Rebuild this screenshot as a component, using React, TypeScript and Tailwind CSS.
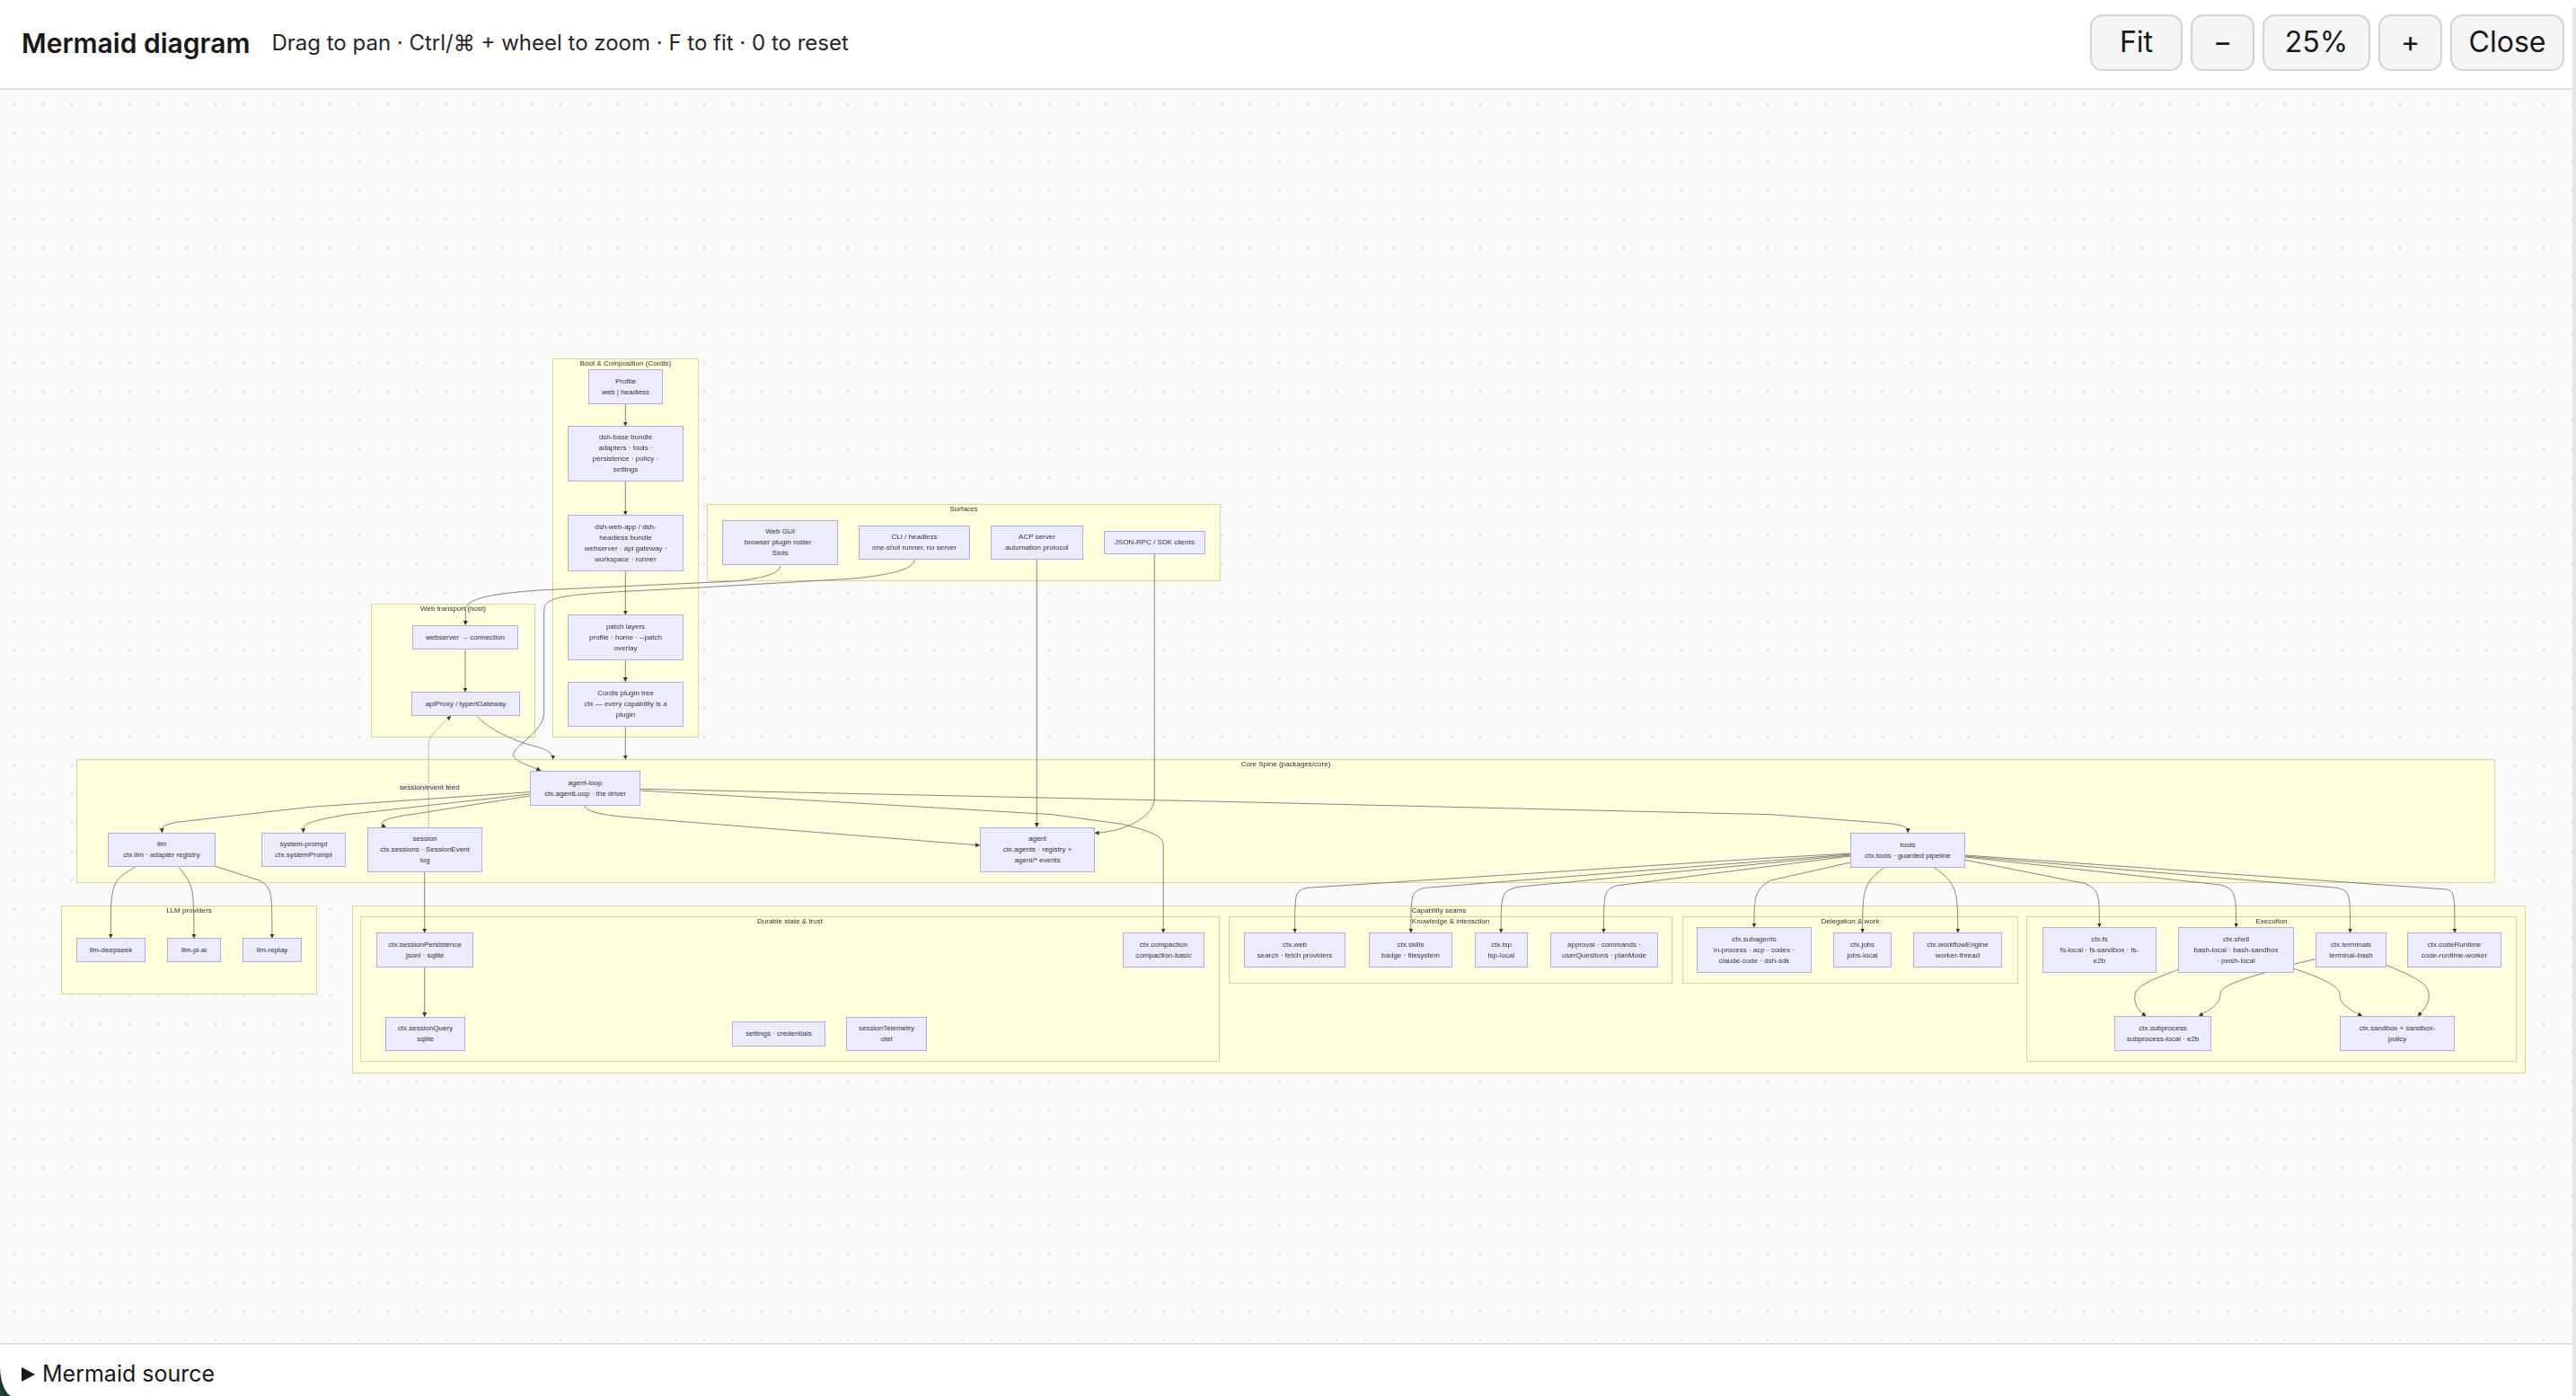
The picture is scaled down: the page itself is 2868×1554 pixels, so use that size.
import type { ReactNode } from 'react';

const ui = "font-['Inter',sans-serif]";

interface BoxProps {
  pos: string;
  lines: string[];
}

const clusters: { pos: string; label: string; labelPos: string }[] = [
  { pos: 'left-[615px] top-[399px] w-[163px] h-[422px]', label: 'Boot & Composition (Cordis)', labelPos: 'left-[615px] top-[399px] w-[163px]' },
  { pos: 'left-[413px] top-[672px] w-[183px] h-[149px]', label: 'Web transport (host)', labelPos: 'left-[413px] top-[672px] w-[183px]' },
  { pos: 'left-[787px] top-[561px] w-[572px] h-[86px]', label: 'Surfaces', labelPos: 'left-[787px] top-[561px] w-[572px]' },
  { pos: 'left-[85px] top-[845px] w-[2693px] h-[138px]', label: 'Core Spine (packages/core)', labelPos: 'left-[85px] top-[845px] w-[2693px]' },
  { pos: 'left-[68px] top-[1008px] w-[285px] h-[99px]', label: 'LLM providers', labelPos: 'left-[68px] top-[1008px] w-[285px]' },
  { pos: 'left-[392px] top-[1008px] w-[2420px] h-[187px]', label: 'Capability seams', labelPos: 'left-[392px] top-[1008px] w-[2420px]' },
  { pos: 'left-[401px] top-[1020px] w-[957px] h-[162px]', label: 'Durable state & trust', labelPos: 'left-[401px] top-[1020px] w-[957px]' },
  { pos: 'left-[1368px] top-[1020px] w-[494px] h-[75px]', label: 'Knowledge & interaction', labelPos: 'left-[1368px] top-[1020px] w-[494px]' },
  { pos: 'left-[1873px] top-[1020px] w-[374px] h-[75px]', label: 'Delegation & work', labelPos: 'left-[1873px] top-[1020px] w-[374px]' },
  { pos: 'left-[2256px] top-[1020px] w-[546px] h-[162px]', label: 'Execution', labelPos: 'left-[2256px] top-[1020px] w-[546px]' },
];

const nodes: BoxProps[] = [
  { pos: 'left-[655px] top-[411px] w-[83px] h-[39px]', lines: ['Profile', 'web | headless'] },
  { pos: 'left-[632px] top-[474px] w-[129px] h-[62px]', lines: ['dsh-base bundle', 'adapters · tools ·', 'persistence · policy ·', 'settings'] },
  { pos: 'left-[632px] top-[573px] w-[129px] h-[63px]', lines: ['dsh-web-app / dsh-', 'headless bundle', 'webserver · api gateway ·', 'workspace · runner'] },
  { pos: 'left-[632px] top-[684px] w-[129px] h-[51px]', lines: ['patch layers', 'profile · home · --patch', 'overlay'] },
  { pos: 'left-[632px] top-[759px] w-[129px] h-[50px]', lines: ['Cordis plugin tree', 'ctx — every capability is a', 'plugin'] },
  { pos: 'left-[459px] top-[696px] w-[118px] h-[27px]', lines: ['webserver → connection'] },
  { pos: 'left-[458px] top-[770px] w-[121px] h-[27px]', lines: ['apiProxy / typertGateway'] },
  { pos: 'left-[804px] top-[579px] w-[129px] h-[50px]', lines: ['Web GUI', 'browser plugin roster ·', 'Slots'] },
  { pos: 'left-[956px] top-[585px] w-[124px] h-[38px]', lines: ['CLI / headless', 'one-shot runner, no server'] },
  { pos: 'left-[1103px] top-[585px] w-[103px] h-[38px]', lines: ['ACP server', 'automation protocol'] },
  { pos: 'left-[1229px] top-[591px] w-[113px] h-[26px]', lines: ['JSON-RPC / SDK clients'] },
  { pos: 'left-[590px] top-[858px] w-[123px] h-[39px]', lines: ['agent-loop', 'ctx.agentLoop · the driver'] },
  { pos: 'left-[120px] top-[927px] w-[120px] h-[38px]', lines: ['llm', 'ctx.llm · adapter registry'] },
  { pos: 'left-[291px] top-[927px] w-[94px] h-[38px]', lines: ['system-prompt', 'ctx.systemPrompt'] },
  { pos: 'left-[409px] top-[921px] w-[128px] h-[50px]', lines: ['session', 'ctx.sessions · SessionEvent', 'log'] },
  { pos: 'left-[1091px] top-[921px] w-[128px] h-[50px]', lines: ['agent', 'ctx.agents · registry +', 'agent/* events'] },
  { pos: 'left-[2060px] top-[927px] w-[128px] h-[39px]', lines: ['tools', 'ctx.tools · guarded pipeline'] },
  { pos: 'left-[85px] top-[1044px] w-[77px] h-[27px]', lines: ['llm-deepseek'] },
  { pos: 'left-[186px] top-[1044px] w-[60px] h-[27px]', lines: ['llm-pi-ai'] },
  { pos: 'left-[270px] top-[1044px] w-[66px] h-[27px]', lines: ['llm-replay'] },
  { pos: 'left-[419px] top-[1038px] w-[108px] h-[39px]', lines: ['ctx.sessionPersistence', 'jsonl · sqlite'] },
  { pos: 'left-[429px] top-[1132px] w-[89px] h-[38px]', lines: ['ctx.sessionQuery', 'sqlite'] },
  { pos: 'left-[815px] top-[1137px] w-[104px] h-[28px]', lines: ['settings · credentials'] },
  { pos: 'left-[942px] top-[1132px] w-[90px] h-[38px]', lines: ['sessionTelemetry', 'otel'] },
  { pos: 'left-[1250px] top-[1038px] w-[91px] h-[39px]', lines: ['ctx.compaction', 'compaction-basic'] },
  { pos: 'left-[1385px] top-[1038px] w-[113px] h-[39px]', lines: ['ctx.web', 'search · fetch providers'] },
  { pos: 'left-[1524px] top-[1038px] w-[93px] h-[39px]', lines: ['ctx.skills', 'badge · filesystem'] },
  { pos: 'left-[1642px] top-[1038px] w-[59px] h-[39px]', lines: ['ctx.lsp', 'lsp-local'] },
  { pos: 'left-[1726px] top-[1038px] w-[120px] h-[39px]', lines: ['approval · commands ·', 'userQuestions · planMode'] },
  { pos: 'left-[1889px] top-[1032px] w-[128px] h-[51px]', lines: ['ctx.subagents', 'in-process · acp · codex ·', 'claude-code · dsh-sdk'] },
  { pos: 'left-[2041px] top-[1038px] w-[65px] h-[39px]', lines: ['ctx.jobs', 'jobs-local'] },
  { pos: 'left-[2130px] top-[1038px] w-[99px] h-[39px]', lines: ['ctx.workflowEngine', 'worker-thread'] },
  { pos: 'left-[2274px] top-[1032px] w-[127px] h-[51px]', lines: ['ctx.fs', 'fs-local · fs-sandbox · fs-', 'e2b'] },
  { pos: 'left-[2425px] top-[1032px] w-[129px] h-[51px]', lines: ['ctx.shell', 'bash-local · bash-sandbox', '· pwsh-local'] },
  { pos: 'left-[2578px] top-[1038px] w-[79px] h-[39px]', lines: ['ctx.terminals', 'terminal-bash'] },
  { pos: 'left-[2680px] top-[1038px] w-[105px] h-[39px]', lines: ['ctx.codeRuntime', 'code-runtime-worker'] },
  { pos: 'left-[2354px] top-[1131px] w-[108px] h-[39px]', lines: ['ctx.subprocess', 'subprocess-local · e2b'] },
  { pos: 'left-[2605px] top-[1131px] w-[128px] h-[39px]', lines: ['ctx.sandbox + sandbox-', 'policy'] },
];

// solid edges with an arrowhead, page coordinates
const edges: string[] = [
  'M696.3 450V474',
  'M696.3 536V573',
  'M696.3 636V684',
  'M696.3 735V758.5',
  'M696.3 809V845',
  'M518 723V770',
  'M868.6 630C868.6 640 840 645 817 647L600 657C535 662 518.3 668 518.3 680V695.5',
  'M1018 623C1018 634 990 640 950 644L780 654L683 659C620 663 605.7 666 605.7 680V793C605.7 815 571.7 830 571.7 840C571.7 848 590 852 601.7 857.7',
  'M530.7 797.3C546.7 813 566.7 821.7 586.7 828.3C606.7 833.3 615.7 836.7 615.7 845',
  'M1154.3 623V920.5',
  'M1285.2 617V890C1285.2 905 1260 925 1219.2 927.3',
  'M589.8 881.7L345.7 898.3L198.8 915C180.4 918.3 180.4 920 180.4 926.7',
  'M589.8 884L386.5 906.7C337.6 915 337.6 918 337.6 926.7',
  'M589.8 886L468.2 905C419 911.7 421 916.7 429.4 920.7',
  'M712.6 878.3L1360 892.3L1971.4 906.7L2103.5 916.7C2123.6 919.3 2124.2 922 2124.2 926.7',
  'M712.6 880L1172 906.7L1248.8 917.3C1294.7 928.3 1295.2 935 1295.2 941.7V1038',
  'M651.3 896.7C651.8 904 672 906.7 690 909L1090.6 941',
  'M2060.4 950L1971 955L1454.8 988.3C1441.6 991.7 1441.6 995 1441.6 1038',
  'M2060.4 951L1586.8 988.3C1570.8 992 1570.8 995 1570.8 1038',
  'M2060.4 952L1690 987.3C1671.2 992 1671.2 995 1671.2 1038',
  'M2060.4 953L1799 986C1785.5 991 1785.5 995 1785.5 1038',
  'M2060.4 960L1971.4 980C1953 990 1953 1000 1953 1032',
  'M2097.8 965.7C2074.8 983 2073.6 990 2073.6 1038',
  'M2153.4 965.7C2178 983 2179.8 990 2179.8 1038',
  'M2187.9 957.3L2320.4 983.3C2337 990 2337.4 995 2337.4 1032',
  'M2187.9 954L2472.2 985C2489 990 2489.6 995 2489.6 1032',
  'M2187.9 953L2602.3 988.3C2616.6 992 2616.6 995 2616.6 1038',
  'M2187.9 952L2723.7 990C2732.9 992 2732.9 996 2732.9 1038',
  'M2425.4 1079.3C2385 1094 2376.8 1100 2376.8 1110C2376.8 1120 2382 1126 2389 1131',
  'M2577.6 1067.7L2553.8 1073.3',
  'M2522 1082.7C2472 1096.7 2472 1103 2472.2 1106.7C2472 1118 2460 1124 2448.4 1131',
  'M2553.8 1078.3C2604.5 1095 2605.4 1103 2605.4 1110C2605.4 1118 2620 1126 2629.6 1131',
  'M2656.5 1074.3C2704 1093 2704.2 1100 2704.2 1110C2704.2 1118 2697 1126 2692 1131',
  'M150.6 965.3C123.3 980 123.3 985 123.3 1044',
  'M198.8 965.3C215.9 985 215.9 990 215.9 1044',
  'M239.6 964.3L288.6 980C302.9 988 302.9 992 302.9 1044',
  'M472.7 971V1038',
  'M472.7 1077V1131.5',
];

function ClusterBox({ pos }: { pos: string }) {
  return <div className={`absolute border border-[#d8d89a] bg-[#ffffde] ${pos}`} />;
}

function ClusterLabel({ pos, children }: { pos: string; children: ReactNode }) {
  return <div className={`absolute text-center leading-[12px] text-[#333] ${pos}`}>{children}</div>;
}

function Node({ pos, lines }: BoxProps) {
  return (
    <div className={`absolute flex flex-col items-center justify-center border border-[#b9a9e6] bg-[#ececff] text-center leading-[12px] text-[#333] whitespace-nowrap ${pos}`}>
      {lines.map((line) => (
        <span key={line}>{line}</span>
      ))}
    </div>
  );
}

function Diagram() {
  return (
    <div className="absolute left-0 top-[-100px] h-[1554px] w-[2868px] blur-[0.35px] font-['Liberation_Sans',sans-serif] text-[8px]">
      {clusters.map((c) => (
        <ClusterBox key={c.label} pos={c.pos} />
      ))}
      <svg className="absolute left-0 top-0" width="2868" height="1554" fill="none">
        <defs>
          <marker id="arrow" viewBox="0 0 10 10" refX="9" refY="5" markerWidth="5" markerHeight="5" markerUnits="userSpaceOnUse" orient="auto">
            <path d="M0 0L10 5L0 10z" fill="#333" />
          </marker>
        </defs>
        {edges.map((d) => (
          <path key={d} d={d} stroke="#666" strokeWidth="0.8" markerEnd={d === 'M2577.6 1067.7L2553.8 1073.3' ? undefined : 'url(#arrow)'} />
        ))}
        <path d="M477.2 920.7V828.3C477.2 820 490 808 501.7 797.3" stroke="#666" strokeWidth="0.8" strokeDasharray="1.5 1.5" markerEnd="url(#arrow)" />
      </svg>
      {clusters.map((c) => (
        <ClusterLabel key={c.label} pos={c.labelPos}>
          {c.label}
        </ClusterLabel>
      ))}
      {nodes.map((n) => (
        <Node key={n.pos} pos={n.pos} lines={n.lines} />
      ))}
      <span className="absolute left-[445px] top-[872px] w-[66px] whitespace-nowrap bg-[#e8e8e8]/50 text-center leading-[10px] text-[#333]">session/event feed</span>
    </div>
  );
}

function ToolButton({ wide, children }: { wide: string; children: ReactNode }) {
  return (
    <button className={`h-[63px] rounded-[14px] border-2 border-[#d4d4d4] bg-[#f5f5f5] text-[32px] text-[#18181b] ${wide}`}>
      {children}
    </button>
  );
}

export default function App() {
  return (
    <div className={`relative flex h-[1554px] w-[2868px] flex-col overflow-hidden bg-[#1f4a44] ${ui}`}>
      <header className="flex h-[100px] shrink-0 items-center justify-between border-b-2 border-[#e2e2e2] bg-white pl-[24px] pr-[13px]">
        <div className="flex items-center gap-[24px] pb-[2px]">
          <h1 className="text-[30px] font-semibold text-[#18181b]">Mermaid diagram</h1>
          <span className="text-[24px] text-[#27272a]">Drag to pan · Ctrl/⌘ + wheel to zoom · F to fit · 0 to reset</span>
        </div>
        <div className="flex items-center gap-[9px] pb-[4px] pl-[1px]">
          <ToolButton wide="w-[103px]">Fit</ToolButton>
          <ToolButton wide="w-[71px]">−</ToolButton>
          <ToolButton wide="w-[120px]">25%</ToolButton>
          <ToolButton wide="w-[71px]">+</ToolButton>
          <ToolButton wide="w-[127px]">Close</ToolButton>
        </div>
      </header>

      <main className="relative flex-1 overflow-hidden bg-[#fafafa] bg-[radial-gradient(circle,#dcdcdc_1px,transparent_1.2px)] bg-[length:32px_32px]">
        <Diagram />
      </main>

      <footer className="flex h-[59px] shrink-0 items-center gap-[8px] rounded-bl-[14px_34px] border-t-2 border-[#e2e2e2] bg-white pl-[24px] pt-[9px] text-[25px] text-[#18181b] shadow-[-3px_2px_4px_rgba(0,0,0,0.3)]">
        <span className="h-0 w-0 border-y-[8px] border-l-[15px] border-y-transparent border-l-[#18181b]" />
        <span>Mermaid source</span>
      </footer>

      <div className="absolute bottom-0 right-0 top-[8px] w-[4px] rounded-tl-[4px] bg-[#e6e6e6]" />
    </div>
  );
}
